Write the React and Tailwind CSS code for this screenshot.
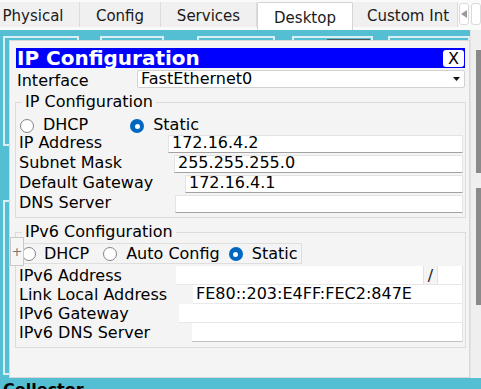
import React from 'react';

const frames = [
  'left-[3px] top-[6px] w-[76px] h-[110px]',
  'left-[100px] top-[6px] w-[64px] h-[90px]',
  'left-[197px] top-[6px] w-[78px] h-[90px]',
  'left-[292px] top-[6px] w-[81px] h-[90px]',
  'left-[388px] top-[6px] w-[82px] h-[90px]',
  'left-[3px] top-[170px] w-[76px] h-[175px]',
];

function Tab({ label, className, active }) {
  return (
    <div
      className={`${className} flex items-center whitespace-nowrap pt-[2px] ${
        active
          ? 'h-[28px] rounded-t-[2px] border-x border-t border-[#d4d4d4] bg-white'
          : 'h-[25px] border-r border-[#dcdcdc] bg-[#f0f0f0]'
      }`}
    >
      {label}
    </div>
  );
}

function Radio({ checked }) {
  if (checked) {
    return (
      <span className="flex h-[14px] w-[14px] shrink-0 items-center justify-center rounded-full bg-[#0067c0]">
        <span className="h-[5px] w-[5px] rounded-full bg-white" />
      </span>
    );
  }
  return <span className="block h-[14px] w-[14px] shrink-0 rounded-full border border-[#858585] bg-white" />;
}

function Field({ label, labelClass, value }) {
  return (
    <div className="flex h-[20px] pl-[3px] pr-[2px]">
      <span className={`${labelClass} shrink-0 whitespace-nowrap leading-[20px]`}>{label}</span>
      <div className="mt-[2px] flex h-[18px] flex-1 items-end whitespace-nowrap border border-[#e4e4e4] border-b-[#a3a3a3] bg-white pl-[3px]">
        <span className="leading-[18px]">{value}</span>
      </div>
    </div>
  );
}

function Field6({ label, labelClass, value, last, children }) {
  return (
    <div className="flex h-[19px] pl-[3px] pr-[2px]">
      <span className={`${labelClass} shrink-0 whitespace-nowrap leading-[19px]`}>{label}</span>
      {children || (
        <div
          className={`flex h-[19px] flex-1 items-end whitespace-nowrap border-b border-r bg-white pl-[3px] ${
            last ? 'border-b-[#c2c2c2] border-r-[#e2e2e2]' : 'border-[#e8e8e8]'
          }`}
        >
          <span className="leading-[18px]">{value}</span>
        </div>
      )}
    </div>
  );
}

function Window() {
  return (
    <div className="relative ml-[9px] mt-[10px] h-[338px] w-[461px] border border-[#d9d9d9] bg-[#f4f4f4] pt-[7px]">
      {/* title bar */}
      <div className="ml-[6px] mr-[4px] flex h-[20px] items-center justify-between bg-[#0000ff] pl-[1px] pr-[1px]">
        <span className="text-[20px] font-bold leading-[20px] text-white">IP Configuration</span>
        <span className="flex h-[17px] w-[21px] items-center justify-center rounded-[3px] bg-white text-[16px] leading-[17px]">X</span>
      </div>

      {/* interface */}
      <div className="ml-[7px] mr-[4px] mt-[2px] flex h-[18px]">
        <span className="w-[120px] shrink-0 pt-[2px] leading-[18px]">Interface</span>
        <div className="flex h-[18px] flex-1 items-center justify-between rounded-[2px] border border-[#d2d2d2] bg-white pl-[3px] pr-[4px]">
          <span className="leading-[16px]">FastEthernet0</span>
          <svg width="7" height="4" viewBox="0 0 7 4">
            <polygon points="0,0 7,0 3.5,4" fill="#111" />
          </svg>
        </div>
      </div>

      {/* IPv4 */}
      <fieldset className="ml-[5px] mr-[3px] mt-[5px] border border-[#dcdcdc] pb-[4px]">
        <legend className="ml-[6px] px-[3px] leading-[18px]">IP Configuration</legend>
        <div className="flex h-[22px] items-end pl-[4px]">
          <Radio />
          <span className="ml-[9px] leading-[17px]">DHCP</span>
          <span className="ml-[42px] flex">
            <Radio checked />
          </span>
          <span className="ml-[9px] leading-[17px]">Static</span>
        </div>
        <Field label="IP Address" labelClass="w-[149px]" value="172.16.4.2" />
        <Field label="Subnet Mask" labelClass="w-[155px]" value="255.255.255.0" />
        <Field label="Default Gateway" labelClass="w-[166px]" value="172.16.4.1" />
        <Field label="DNS Server" labelClass="w-[156px]" value="" />
      </fieldset>

      {/* IPv6 */}
      <fieldset className="ml-[5px] mr-[3px] mt-[5px] border border-[#dcdcdc] pb-[5px]">
        <legend className="ml-[6px] px-[3px] leading-[18px]">IPv6 Configuration</legend>
        <div className="ml-[4px] mt-[2px] flex h-[21px] w-[282px] items-end border border-[#dedede] pb-[1px] pl-[1px]">
          <span className="mb-[1px] flex">
            <Radio />
          </span>
          <span className="ml-[8px] leading-[17px]">DHCP</span>
          <span className="mb-[1px] ml-[14px] flex">
            <Radio />
          </span>
          <span className="ml-[9px] leading-[17px]">Auto Config</span>
          <span className="mb-[1px] ml-[9px] flex">
            <Radio checked />
          </span>
          <span className="ml-[9px] leading-[17px]">Static</span>
        </div>
        <div className="mt-[2px]">
          <Field6 label="IPv6 Address" labelClass="w-[157px]">
            <div className="flex h-[19px] flex-1 border-b border-[#e8e8e8]">
              <div className="flex-1 border-r border-[#e2e2e2] bg-white" />
              <span className="w-[13px] text-center leading-[19px] text-[#222]">/</span>
              <div className="w-[26px] border-x border-[#e2e2e2] bg-white" />
            </div>
          </Field6>
          <Field6 label="Link Local Address" labelClass="w-[174px]" value="FE80::203:E4FF:FEC2:847E" />
          <Field6 label="IPv6 Gateway" labelClass="w-[160px]" value="" />
          <Field6 label="IPv6 DNS Server" labelClass="w-[173px]" value="" last />
        </div>
      </fieldset>

      {/* splitter handle */}
      <div className="absolute left-0 top-[196px] flex h-[29px] w-[14px] items-center justify-center border border-[#c9c9c9] bg-[#f6f6f6] text-[13px] leading-[13px] text-[#777]">
        +
      </div>
    </div>
  );
}

export default function App() {
  return (
    <div className="relative h-[389px] w-[481px] overflow-hidden bg-[#54bfd3] font-['DejaVu_Sans',sans-serif] text-[16px] text-black">
      {/* tabs */}
      <div className="flex h-[30px] items-start bg-[#fafafa] text-[15px] leading-[18px] text-[#1a1a1a]">
        <div className="ml-[-13px] mt-[2px] flex items-start">
          <Tab label="Physical" className="w-[93px] justify-center" />
          <Tab label="Config" className="w-[81px] justify-center" />
          <Tab label="Services" className="w-[96px] justify-center" />
          <Tab label="Desktop" className="w-[96px] justify-center" active />
          <Tab label="Custom Int" className="w-[105px] justify-start overflow-hidden pl-[14px]" />
        </div>
        <div className="ml-[1px] mt-[3px] flex h-[22px] w-[17px] items-center justify-center rounded-[3px] border border-[#dadada] bg-white">
          <svg width="6" height="8" viewBox="0 0 6 8">
            <polygon points="6,0 6,8 0,4" fill="#9a9a9a" />
          </svg>
        </div>
        <div className="ml-[2px] mt-[3px] h-[22px] w-[17px] rounded-[3px] border border-[#dadada] bg-white" />
      </div>

      {/* desktop + window */}
      <div className="flex h-[348px]">
        <div className="relative w-[470px]">
          {frames.map((f) => (
            <div key={f} className={`absolute ${f} border-2 border-[#d9eff4]`} />
          ))}
          <div className="absolute left-[327px] top-[9px] h-[2px] w-[43px] bg-[#555]" />
          <Window />
        </div>
        <div className="flex w-[11px] flex-col border-l border-[#e2e2e2] bg-[#efefef] pl-[5px]">
          <div className="mt-[20px] h-[123px] w-[5px] bg-[#8a8a8a]" />
          <div className="mt-[15px] h-[117px] w-[5px] bg-[#8a8a8a]" />
        </div>
      </div>

      <div className="mt-[2px] pl-[3px] text-[16px] font-bold leading-[19px]">Collector</div>
    </div>
  );
}
